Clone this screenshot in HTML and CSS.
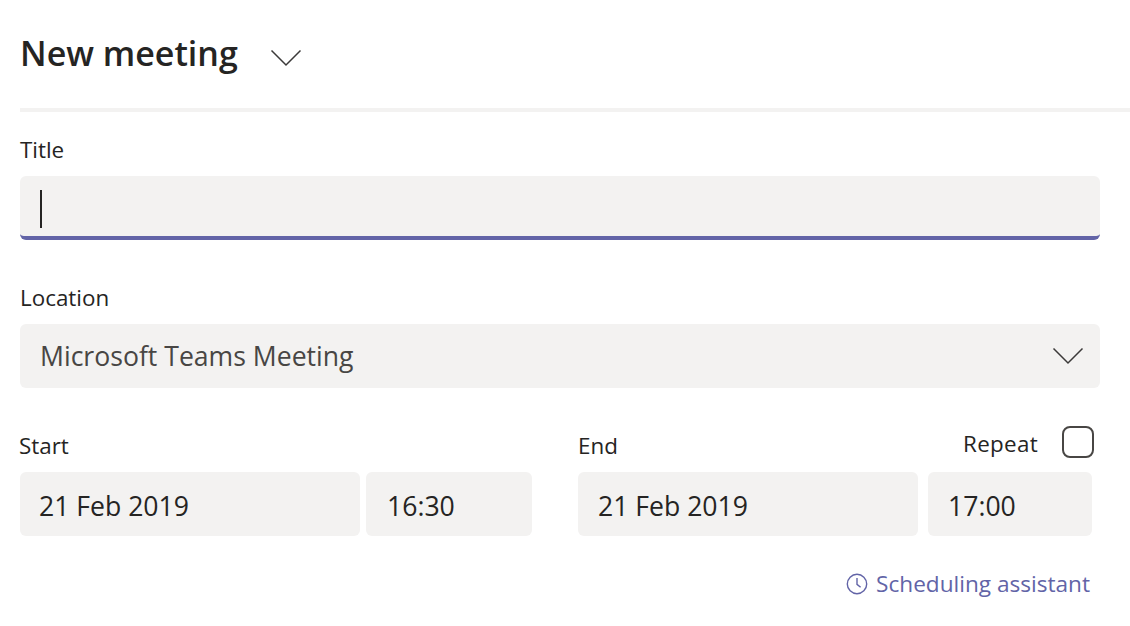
FILE: index.html
```html
<!DOCTYPE html>
<html lang="en">
<head>
<meta charset="utf-8">
<title>New meeting</title>
<link rel="stylesheet" href="styles.css">
</head>
<body>
<main class="form">
  <header class="header">
    <h1 class="heading">New meeting</h1>
    <svg class="chev-head" width="32" height="18" viewBox="0 0 32 18"><path d="M1.500 1.500 16 16 30.500 1.500" fill="none" stroke="#3b3a39" stroke-width="1.500"/></svg>
  </header>
  <section class="field field-title">
    <label class="label">Title</label>
    <div class="box box-title"><span class="caret"></span></div>
  </section>
  <section class="field field-location">
    <label class="label">Location</label>
    <div class="box box-select">
      <span class="value value-muted">Microsoft Teams Meeting</span>
      <svg class="chev-select" width="32" height="18" viewBox="0 0 32 18"><path d="M1.500 1.500 16 16 30.500 1.500" fill="none" stroke="#3b3a39" stroke-width="1.500"/></svg>
    </div>
  </section>
  <section class="times">
    <div class="side side-start">
      <div class="side-head"><span class="label">Start</span></div>
      <div class="pair pair-start">
        <div class="box date date-start"><span class="value">21 Feb 2019</span></div>
        <div class="box time-start"><span class="value">16:30</span></div>
      </div>
    </div>
    <div class="side side-end">
      <div class="side-head">
        <span class="label">End</span>
        <span class="repeat"><span class="label repeat-label">Repeat</span><span class="check"></span></span>
      </div>
      <div class="pair pair-end">
        <div class="box date"><span class="value">21 Feb 2019</span></div>
        <div class="box time-end"><span class="value">17:00</span></div>
      </div>
    </div>
  </section>
  <div class="assistant">
    <svg width="22" height="22" viewBox="0 0 22 22"><circle cx="11" cy="11" r="9.700" fill="none" stroke="#6264a7" stroke-width="1.400"/><path d="M11 5v6.300l3.600 3" fill="none" stroke="#6264a7" stroke-width="1.400"/></svg>
    <span class="assistant-text">Scheduling assistant</span>
  </div>
</main>
</body>
</html>
```

FILE: styles.css
```css
* { box-sizing: border-box; }
html, body { margin: 0; padding: 0; background: #fff; }
body { width: 1130px; height: 626px; overflow: hidden; font-family: "Open Sans", "Noto Sans", sans-serif; color: #252423; }
.form { padding-left: 20px; display: flex; flex-direction: column; }
.header { height: 112px; border-bottom: 4px solid #f3f2f1; display: flex; align-items: flex-start; padding-top: 29px; }
.heading { margin: 0; font-size: 34px; line-height: 48px; font-weight: 600; color: #252423; }
.chev-head { margin: 20px 0 0 32px; }
.label { font-size: 22.4px; line-height: 28px; color: #252423; }
.repeat-label { letter-spacing: 0.3px; }
.field { display: flex; flex-direction: column; width: 1080px; }
.field .label { margin-bottom: 12px; }
.field-title { padding-top: 24px; }
.field-location { padding-top: 44px; }
.box { height: 64px; background: #f3f2f1; border-radius: 6px; display: flex; align-items: center; padding-left: 20px; }
.box-title { border-bottom: 4px solid #6264a7; border-radius: 6px; }
.caret { width: 2px; height: 38px; background: #252423; margin-top: 6px; }
.box-select { justify-content: space-between; padding-right: 16px; }
.value { font-size: 26.6px; line-height: 38px; color: #252423; }
.date .value, .time-start .value, .time-end .value { padding-top: 4px; }
.value-muted { color: #484644; }
.times { display: flex; padding-top: 36px; }
.side-head { height: 48px; display: flex; justify-content: space-between; align-items: flex-end; padding-bottom: 12px; }
.side-start { width: 559px; margin-left: -1px; }
.side-end { width: 516px; }
.pair { display: flex; }
.pair-start { gap: 6px; padding-left: 1px; }
.pair-end { gap: 10px; }
.date { width: 340px; }
.date-start { padding-left: 19px; }
.time-start { width: 166px; padding-left: 21px; }
.time-end { width: 164px; }
.repeat { display: flex; align-items: center; gap: 24px; }
.check { width: 32px; height: 32px; border: 2px solid #484644; border-radius: 8px; margin: -2px 0 2px; }
.assistant { width: 1070px; margin-top: 36px; display: flex; justify-content: flex-end; align-items: center; gap: 8px; color: #6264a7; }
.assistant-text { font-size: 22.6px; line-height: 24px; }
```
